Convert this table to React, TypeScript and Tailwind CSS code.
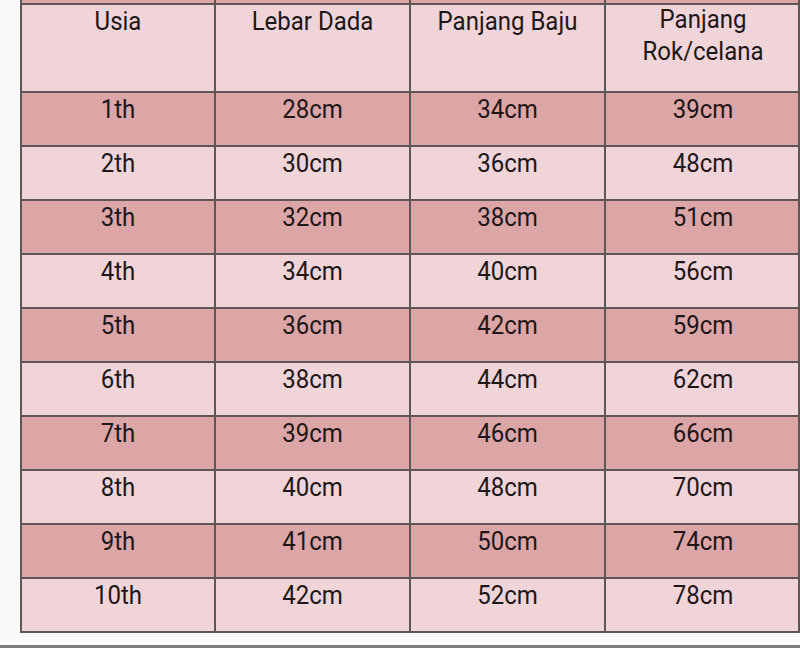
const HEADERS = ['Usia', 'Lebar Dada', 'Panjang Baju', 'Panjang Rok/celana']

const ROWS: [string, string, string, string][] = [
  ['1th', '28cm', '34cm', '39cm'],
  ['2th', '30cm', '36cm', '48cm'],
  ['3th', '32cm', '38cm', '51cm'],
  ['4th', '34cm', '40cm', '56cm'],
  ['5th', '36cm', '42cm', '59cm'],
  ['6th', '38cm', '44cm', '62cm'],
  ['7th', '39cm', '46cm', '66cm'],
  ['8th', '40cm', '48cm', '70cm'],
  ['9th', '41cm', '50cm', '74cm'],
  ['10th', '42cm', '52cm', '78cm'],
]

const COLS = 'grid grid-cols-[194px_195px_195px_194px]'

function Row({ cells, dark, tall }: { cells: string[]; dark: boolean; tall?: boolean }) {
  return (
    <div className={`${COLS} border-b-2 border-[#5f5757] ${dark ? 'bg-[#dca6a6]' : 'bg-[#f1d4d8]'}`}>
      {cells.map((c, i) => (
        <div
          key={i}
          className={`text-center ${tall ? 'h-[86px] pt-[2px] px-6 leading-[29px]' : 'h-[52px] pt-0'} ${i < 3 ? 'border-r-2 border-[#5f5757]' : ''}`}
        >
          {/* the photo is a little stretched vertically */}
          <span className="inline-block scale-y-110">{c}</span>
        </div>
      ))}
    </div>
  )
}

export default function App() {
  return (
    <div
      className="relative w-[800px] h-[648px] bg-[#fbfafa] overflow-hidden text-[24px] leading-[32px] text-[#1e1717]"
      style={{ fontFamily: 'Roboto, "Noto Sans", sans-serif' }}
    >
      <div className="ml-[20px] w-[780px] border-l-2 border-r-2 border-[#5f5757]">
        {/* tail of the row above, cut off at the top */}
        <div className={`${COLS} h-[5px] border-b-2 border-[#5f5757] bg-[#dca6a6]`}>
          <div className="border-r-2 border-[#5f5757]" />
          <div className="border-r-2 border-[#5f5757]" />
          <div className="border-r-2 border-[#5f5757]" />
          <div />
        </div>
        <Row cells={HEADERS} dark={false} tall />
        {ROWS.map((r, i) => (
          <Row key={r[0]} cells={r} dark={i % 2 === 0} />
        ))}
      </div>
      <div className="absolute bottom-0 left-0 w-full h-[3px] bg-[#7c7c7c]" />
    </div>
  )
}
